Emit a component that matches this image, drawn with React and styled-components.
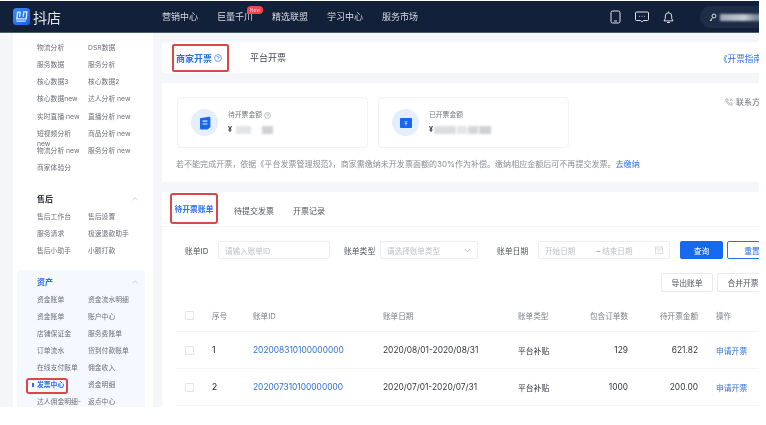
import React from "react";
import styled, { createGlobalStyle } from "styled-components";

const Global = createGlobalStyle`
  html, body { margin: 0; padding: 0; background: #fff; }
  body { font-family: Inter, "Noto Sans CJK SC", "Liberation Sans", sans-serif; }
`;

const Viewport = styled.div`
  width: 766px; height: 425px; overflow: hidden; background: #fff; padding-top: 1px; box-sizing: border-box;
`;
const Frame = styled.div`
  width: 759px; height: 406px; overflow: hidden; display: flex; flex-direction: column;
  background: #f5f6f9; filter: blur(0.55px);
`;
const Header = styled.header`
  flex: none; height: 32px; box-sizing: border-box; background: #13203a; border-bottom: 1px solid #48606c;
  display: flex; align-items: center; padding-left: 13px; color: #d5d9df; position: relative;
`;
const Brand = styled.div`
  width: 149px; flex: none; display: flex; align-items: center; gap: 3px;
  font-size: 14px; color: #e4e7ec; letter-spacing: 0;
`;
const Nav = styled.nav`display: flex; gap: 19px; font-size: 9px;`;
const NavItem = styled.span`position: relative; white-space: nowrap; width: 36px;`;
const NewBadge = styled.span`
  position: absolute; left: 30px; top: -4px; width: 16px; height: 8px; border-radius: 4px 4px 4px 0; background: #f0464e;
  color: #fbd; font-size: 5px; line-height: 8px; text-align: center;
`;
const HeaderRight = styled.div`
  position: absolute; left: 610px; top: 5px; display: flex; align-items: center; gap: 14px; height: 22px;
`;
const UserPill = styled.div`
  margin-left: 12px; width: 90px; height: 22px; border-radius: 11px 0 0 11px; background: #1e2c46;
  display: flex; align-items: center; padding-left: 9px; gap: 3px;
`;
const UserName = styled.div`width: 60px; height: 7px; background: linear-gradient(90deg,#9ea7b4,#c7ccd4 40%,#7e8998 60%,#b7bcc6); filter: blur(1.2px);`;

const Body = styled.div`flex: 1; min-height: 0; display: flex; padding-left: 13px; overflow: hidden;`;
const Sidebar = styled.aside`
  flex: none; width: 140px; box-sizing: border-box; background: #fff; padding: 10px 8px 0 4px; overflow: hidden;
`;
const Section = styled.section`
  padding: ${p => (p.$active ? "6px 0 6px 20px" : "0 0 0 20px")};
  margin-top: ${p => p.$gap || 0}px;
  background: ${p => (p.$active ? "#f5f8ff" : "transparent")};
  border-radius: 3px 3px 0 0;
`;
const SectionTitle = styled.div`
  display: flex; justify-content: space-between; align-items: center; height: 12px; padding-right: 7px; margin-bottom: 7px;
  font-size: 8px; font-weight: 600; color: ${p => (p.$active ? "#2a6ff0" : "#2b2f36")};
`;
const Caret = styled.svg`width: 6px; height: 4px; fill: none; stroke: #c6cad2; stroke-width: 0.8;`;
const MenuGrid = styled.div`display: grid; grid-template-columns: 51px 56px; grid-auto-rows: 17.15px;`;
const MenuItem = styled.div`
  width: 46px; font-size: 6.8px; line-height: 10px; color: ${p => (p.$on ? "#2a6ff0" : "#6d7078")}; font-weight: ${p => (p.$on ? 600 : 400)};
  position: relative; word-break: normal;
  ${p => p.$wide && "width: 56px;"}
  ${p => p.$on && `
    &::before { content: ""; position: absolute; left: -5px; top: 3px; width: 2px; height: 4px; background: #2a6ff0; }
    &::after { content: ""; position: absolute; left: -11px; top: -2px; width: 38px; height: 12px; border: 2px solid #d9474a; border-radius: 3px; }
  `}
`;

const Main = styled.main`flex: 1; min-width: 0; padding: 9px 0 0 9px; display: flex; flex-direction: column; gap: 10px;`;
const TabCard = styled.div`
  flex: none; width: 600px; height: 31px; background: #fff; border-radius: 3px; display: flex; align-items: center; padding-left: 10px; position: relative; box-sizing: border-box;
`;
const PrimaryTab = styled.div`
  width: 57px; height: 28px; margin-top: 1px; box-sizing: border-box; border: 2px solid #d9474a; border-radius: 2px;
  display: flex; align-items: center; justify-content: flex-start; padding-left: 2px; gap: 2px;
  font-size: 9px; font-weight: 600; color: #2a6ff0; white-space: nowrap;
`;
const PlainTab = styled.div`font-size: 9px; color: #4a4e55; margin-left: 21px;`;
const GuideLink = styled.a`position: absolute; left: 557px; top: 10px; font-size: 8.6px; color: #2a6ff0; white-space: nowrap;`;

const StatCard = styled.div`
  flex: none; height: 99px; width: 600px; box-sizing: border-box; background: #fff; padding: 14px 0 0 15px; position: relative;
`;
const StatRow = styled.div`display: flex; gap: 10px;`;
const Stat = styled.div`
  width: 191px; height: 51px; box-sizing: border-box; border: 1px solid #f1f2f5; border-radius: 4px;
  display: flex; align-items: center; padding-left: 13px; gap: 10px;
`;
const StatIcon = styled.div`
  width: 27px; height: 27px; border-radius: 50%; background: #e4eefc; display: flex; align-items: center; justify-content: center; flex: none;
`;
const StatText = styled.div`display: flex; flex-direction: column; gap: 6px;`;
const StatLabel = styled.div`font-size: 6.8px; line-height: 8px; color: #75787f; display: flex; align-items: center; gap: 2px;`;
const StatValue = styled.div`font-size: 7px; line-height: 9px; font-weight: 700; color: #33363c; display: flex; align-items: center; gap: ${p => p.$gap || 3}px;`;
const Blur = styled.span`display: inline-block; height: 8px; width: ${p => p.$w}px; background: ${p => p.$c || "#d5d7da"}; filter: blur(1px);`;
const Contact = styled.div`position: absolute; left: 563px; top: 14px; font-size: 8px; line-height: 10px; color: #6b6e75; display: flex; align-items: center; gap: 3px; white-space: nowrap;`;
const Notice = styled.p`margin: 11px 0 0 -1px; font-size: 8.04px; line-height: 10px; color: #8a8d93; white-space: nowrap;`;
const NoticeLink = styled.a`color: #2a6ff0;`;

const TableCard = styled.div`flex: 1; width: 600px; background: #fff; box-sizing: border-box;`;
const SubTabs = styled.div`
  height: 35px; box-sizing: border-box; border-bottom: 1px solid #f3f4f6; display: flex; align-items: center; padding-left: 8px; padding-top: 2px; margin-left: 0;
  font-size: 8px; color: #50545b;
`;
const SubTabActive = styled.div`
  width: 48px; height: 31px; box-sizing: border-box; border: 2px solid #d9474a; border-radius: 3px; margin-top: -3px;
  display: flex; align-items: center; justify-content: center; color: #2a6ff0; font-weight: 600; white-space: nowrap;
  font-size: 7.8px;
`;
const SubTab = styled.div`margin-left: ${p => p.$ml}px; white-space: nowrap;`;

const Filters = styled.div`display: flex; align-items: center; height: 18px; margin-top: 14px; padding-left: 23px; font-size: 7.8px; color: #50545b;`;
const FLabel = styled.label`flex: none; width: ${p => p.$w}px; margin-left: ${p => p.$ml || 0}px; white-space: nowrap;`;
const Field = styled.div`
  flex: none; width: ${p => p.$w}px; height: 18px; box-sizing: border-box; border: 1px solid #eceef1; border-radius: 2px;
  display: flex; align-items: center; padding: 0 6px; color: #bdc0c6; font-size: 7.6px; justify-content: ${p => p.$between ? "space-between" : "flex-start"}; white-space: nowrap;
`;
const DateDash = styled.span`color: #777; margin: 0 2px 0 21px;`;
const QueryBtn = styled.button`
  flex: none; width: 43px; height: 18px; margin-left: 10px; border: 0; border-radius: 2px; background: #1668f0; color: #fff; font: inherit; font-size: 7.8px; padding: 0;
`;
const ResetBtn = styled.button`
  flex: none; width: 50px; height: 18px; margin-left: 4px; background: #fff; border: 1px solid #2a6ff0; border-radius: 2px; color: #2a6ff0; font: inherit; font-size: 7.8px; padding: 0;
`;
const Actions = styled.div`display: flex; margin-top: 14px; padding-left: 499px; gap: 4px;`;
const GhostBtn = styled.button`
  flex: none; width: ${p => p.$w}px; height: 19px; background: #fff; border: 1px solid #e9eaee; border-radius: 2px; color: #50545b; font: inherit; font-size: 7.8px; padding: 0; white-space: nowrap;
`;
const TableRow = styled.div`
  display: grid; grid-template-columns: 36px 41px 130px 135px 60px 50px 70px 18px 60px; align-items: center; margin-left: 14px;
  height: ${p => p.$h}px; box-sizing: border-box; border-bottom: 1px solid #f3f4f6;
  font-size: ${p => p.$head ? 7.6 : 8.4}px; color: ${p => p.$head ? "#7c7f86" : "#33363c"};
  padding-top: ${p => p.$head ? 8 : 0}px;
`;
const Cell = styled.div`white-space: nowrap; text-align: ${p => p.$right ? "right" : "left"}; color: ${p => p.$link ? "#2f74d8" : "inherit"}; font-weight: ${p => p.$strong ? 500 : 400}; font-size: ${p => p.$small ? "7.8px" : "inherit"};`;
const Checkbox = styled.span`display: block; width: 9px; height: 9px; margin-left: 9px; border: 1px solid #e3e5e9; border-radius: 1px; box-sizing: border-box;`;
const Spacer = styled.div``;

const menuTop = [
  ["物流分析", "DSR数据"], ["服务数据", "服务分析"], ["核心数据3", "核心数据2"], ["核心数据new", "达人分析 new"],
  ["实时直播 new", "直播分析 new"], ["短视频分析 new", "商品分析 new"], ["物流分析 new", "服务分析 new"], ["商家体验分", ""],
];
const menuAfter = [["售后工作台", "售后设置"], ["服务请求", "极速退款助手"], ["售后小助手", "小额打款"]];
const menuAssets = [
  ["资金账单", "资金流水明细"], ["资金账单", "账户中心"], ["店铺保证金", "服务费账单"], ["订单流水", "货到付款账单"],
  ["在线支付账单", "佣金收入"], ["发票中心", "资金明细"], ["达人佣金明细-", "返点中心"],
];

const Menu = ({ rows }) => (
  <MenuGrid>
    {rows.flatMap(([a, b]) => [
      <MenuItem key={a + b + "a"} $on={a === "发票中心"}>{a}</MenuItem>,
      <MenuItem key={a + b + "b"} $wide>{b}</MenuItem>,
    ])}
  </MenuGrid>
);

const CaretUp = () => <Caret viewBox="0 0 6 4"><path d="M.5 3.2 3 .8l2.5 2.4" /></Caret>;
const Help = ({ c = "#8d9097", s = 8 }) => (
  <svg width={s} height={s} viewBox="0 0 12 12" fill="none" stroke={c} strokeWidth="0.9">
    <circle cx="6" cy="6" r="5.2" />
    <path d="M4.5 4.7a1.5 1.5 0 1 1 2.3 1.3c-.5.3-.8.6-.8 1.2" />
    <path d="M6 8.4v.8" />
  </svg>
);

const rows = [
  { n: 1, id: "202008310100000000", date: "2020/08/01-2020/08/31", cnt: "129", amt: "621.82" },
  { n: 2, id: "202007310100000000", date: "2020/07/01-2020/07/31", cnt: "1000", amt: "200.00" },
];

export default function App() {
  return (
    <Viewport>
      <Global />
      <Frame>
        <Header>
          <Brand>
            <svg width="17" height="17" viewBox="0 0 17 17">
              <defs>
                <linearGradient id="lg" x1="0" y1="0" x2="1" y2="1">
                  <stop offset="0" stopColor="#3a8cf5" /><stop offset="1" stopColor="#1660ee" />
                </linearGradient>
              </defs>
              <rect width="17" height="17" rx="3.5" fill="url(#lg)" />
              <path d="M7.2 3.8 4.600 4.400 3.800 10.800H13.200L13.800 3.800H10.800L10.200 8.800M7.200 3.800 6.600 8.800M3.400 13.200H12.800" fill="none" stroke="#dff0ff" strokeWidth="1.3" />
            </svg>
            <span>抖店</span>
          </Brand>
          <Nav>
            <NavItem>营销中心</NavItem>
            <NavItem>巨量千川<NewBadge>New</NewBadge></NavItem>
            <NavItem>精选联盟</NavItem>
            <NavItem>学习中心</NavItem>
            <NavItem>服务市场</NavItem>
          </Nav>
          <HeaderRight>
            <svg width="11" height="14" viewBox="0 0 11 14" fill="none" stroke="#dfe3e8" strokeWidth="1">
              <rect x="1" y="1" width="9" height="12" rx="1.6" /><path d="M4 11h3" />
            </svg>
            <svg width="14" height="12" viewBox="0 0 14 12" fill="none" stroke="#dfe3e8" strokeWidth="1">
              <path d="M1.5 1h11a1 1 0 0 1 1 1v6.5a1 1 0 0 1-1 1H8.400L7 11 5.600 9.500H1.500a1 1 0 0 1-1-1V2a1 1 0 0 1 1-1Z" />
              <path d="M4.200 5.300h.8M6.600 5.300h.8M9 5.300h.8" />
            </svg>
            <svg width="11" height="13" viewBox="0 0 11 13" fill="none" stroke="#dfe3e8" strokeWidth="1">
              <path d="M5.500 1.800a3.200 3.200 0 0 1 3.200 3.200v2.600L10 9.900H1l1.300-2.300V5a3.200 3.200 0 0 1 3.200-3.200ZM5.500.5v1.300M4 11.500h3" />
            </svg>
            <UserPill>
              <svg width="8" height="9" viewBox="0 0 8 9" fill="none" stroke="#d8dce2" strokeWidth="1">
                <circle cx="5" cy="3" r="2" /><path d="M3.600 4.500 1 8M2 6.800l1 .8" />
              </svg>
              <UserName />
            </UserPill>
          </HeaderRight>
        </Header>
        <Body>
          <Sidebar>
            <Section><Menu rows={menuTop} /></Section>
            <Section $gap={12.5}>
              <SectionTitle>售后<CaretUp /></SectionTitle>
              <Menu rows={menuAfter} />
            </Section>
            <Section $active $gap={6.5}>
              <SectionTitle $active>资产<CaretUp /></SectionTitle>
              <Menu rows={menuAssets} />
            </Section>
          </Sidebar>
          <Main>
            <TabCard>
              <PrimaryTab>商家开票<Help c="#2a6ff0" /></PrimaryTab>
              <PlainTab>平台开票</PlainTab>
              <GuideLink>《开票指南</GuideLink>
            </TabCard>
            <StatCard>
              <StatRow>
                <Stat>
                  <StatIcon>
                    <svg width="12" height="14" viewBox="0 0 12 14">
                      <path d="M1 2.200 10 .8c.9 0 1.400.5 1.400 1.200v9.200L8.600 13.600H2.400C1.500 13.600 1 13 1 12.200Z" fill="#1668f0" />
                      <path d="M3.600 5.200h4.800M3.600 8h4.800" stroke="#e4eefc" strokeWidth="1.200" />
                    </svg>
                  </StatIcon>
                  <StatText>
                    <StatLabel>待开票金额<Help s={7} /></StatLabel>
                    <StatValue $gap={4}>¥<Blur $w={15} $c="#e3e4e6" /><Blur $w={3} $c="#fff" /><Blur $w={11} $c="#d0d1d4" /></StatValue>
                  </StatText>
                </Stat>
                <Stat>
                  <StatIcon>
                    <svg width="12" height="10" viewBox="0 0 12 10">
                      <rect width="12" height="10" fill="#1668f0" rx="0.800" />
                      <path d="M4.600 3 6 4.600 7.400 3M6 4.600V7.400M4.800 5.400h2.400" stroke="#d4e5ff" strokeWidth="0.800" fill="none" />
                    </svg>
                  </StatIcon>
                  <StatText>
                    <StatLabel>已开票金额</StatLabel>
                    <StatValue $gap={1}>¥<Blur $w={22} $c="#dcdde0" /><Blur $w={10} $c="#e4e5e7" /><Blur $w={10} $c="#d5d6d9" /><Blur $w={12} $c="#d0d1d4" /></StatValue>
                  </StatText>
                </Stat>
              </StatRow>
              <Notice>
                若不能完成开票，依据《平台发票管理规范》，商家需缴纳未开发票面额的30%作为补偿。缴纳相应金额后可不再提交发票。<NoticeLink>去缴纳</NoticeLink>
              </Notice>
              <Contact>
                <svg width="8" height="8" viewBox="0 0 10 10" fill="none" stroke="#85888f" strokeWidth="0.800">
                  <path d="M1 1.500 3 1l1.200 2L3 4c.6 1.300 1.600 2.300 3 3l1-1.200L9 7l-.5 2C4.500 9.200.8 5.500 1 1.500Z" />
                  <path d="M6 1a3 3 0 0 1 3 3M6 2.600A1.400 1.400 0 0 1 7.400 4" />
                </svg>
                联系方式
              </Contact>
            </StatCard>
            <TableCard>
              <SubTabs>
                <SubTabActive>待开票账单</SubTabActive>
                <SubTab $ml={16}>待提交发票</SubTab>
                <SubTab $ml={19}>开票记录</SubTab>
              </SubTabs>
              <Filters>
                <FLabel $w={33}>账单ID</FLabel>
                <Field $w={112}>请输入账单ID</Field>
                <FLabel $w={36} $ml={14}>账单类型</FLabel>
                <Field $w={98} $between>
                  请选择账单类型
                  <svg width="7" height="5" viewBox="0 0 7 5" fill="none" stroke="#a9adb4" strokeWidth="0.800"><path d="m.8 1 2.700 2.800L6.200 1" /></svg>
                </Field>
                <FLabel $w={41} $ml={19}>账单日期</FLabel>
                <Field $w={132} $between>
                  <span>开始日期<DateDash>–</DateDash>结束日期</span>
                  <svg width="8" height="8" viewBox="0 0 8 8" fill="none" stroke="#d2d4d9" strokeWidth="0.800"><rect x=".5" y="1" width="7" height="6.500" /><path d="M.5 3h7M2.500 5h3" /></svg>
                </Field>
                <QueryBtn>查询</QueryBtn>
                <ResetBtn>重置</ResetBtn>
              </Filters>
              <Actions>
                <GhostBtn $w={52}>导出账单</GhostBtn>
                <GhostBtn $w={52}>合并开票</GhostBtn>
              </Actions>
              <TableRow $head $h={40}>
                <Checkbox />
                <Cell>序号</Cell>
                <Cell>账单ID</Cell>
                <Cell>账单日期</Cell>
                <Cell>账单类型</Cell>
                <Cell $right>包含订单数</Cell>
                <Cell $right>待开票金额</Cell>
                <Spacer />
                <Cell>操作</Cell>
              </TableRow>
              {rows.map(r => (
                <TableRow key={r.n} $h={37}>
                  <Checkbox />
                  <Cell $strong>{r.n}</Cell>
                  <Cell $link>{r.id}</Cell>
                  <Cell>{r.date}</Cell>
                  <Cell $small>平台补贴</Cell>
                  <Cell $right>{r.cnt}</Cell>
                  <Cell $right>{r.amt}</Cell>
                  <Spacer />
                  <Cell $link $small>申请开票</Cell>
                </TableRow>
              ))}
            </TableCard>
          </Main>
        </Body>
      </Frame>
    </Viewport>
  );
}
